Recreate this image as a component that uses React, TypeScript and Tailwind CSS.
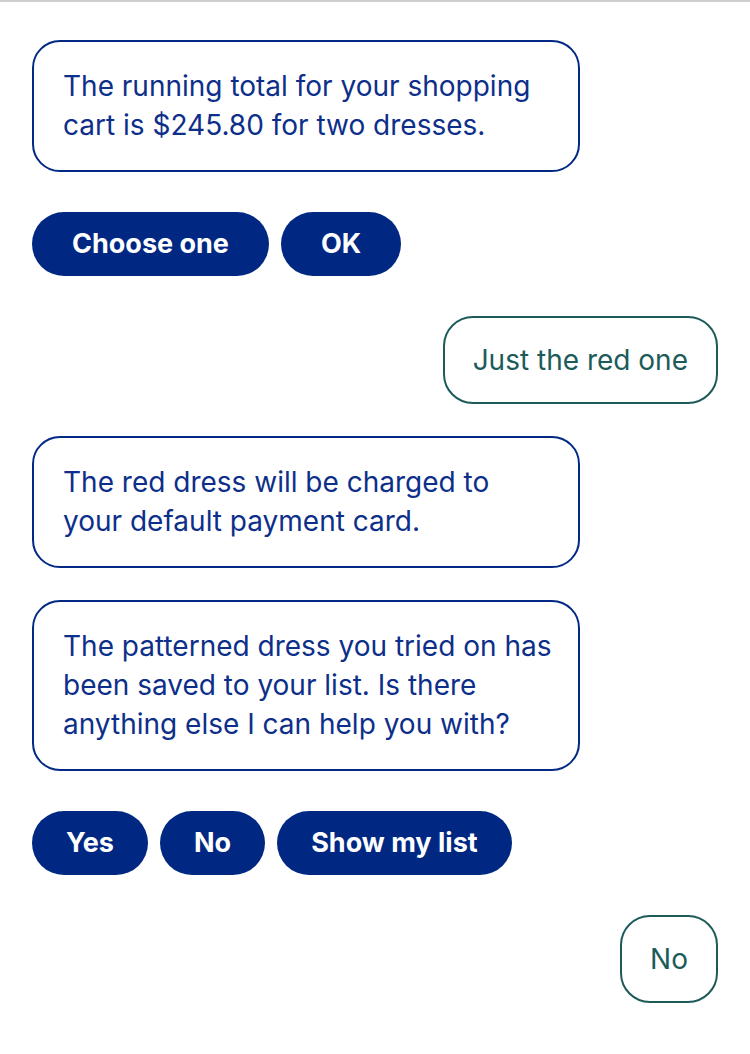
const font = { fontFamily: "Inter, 'Noto Sans', sans-serif" };

function BotBubble({ children }: { children: React.ReactNode }) {
  return (
    <div className="w-[548px] rounded-[28px] border-2 border-[#022a84] pl-[29px] pr-[23px] py-[25px] text-[28px] leading-[39px] text-[#0d2f8a]">
      {children}
    </div>
  );
}

function UserBubble({ children }: { children: React.ReactNode }) {
  return (
    <div className="self-end rounded-[30px] border-2 border-[#1d5b5a] px-[28px] py-[22px] text-[28px] leading-[40px] text-[#1d5b5a]">
      {children}
    </div>
  );
}

function Chips({ items, wide }: { items: string[]; wide?: boolean }) {
  return (
    <div className="flex gap-3">
      {items.map((t) => (
        <button
          key={t}
          className={`h-16 rounded-full bg-[#002882] text-[27px] font-bold text-white ${
            wide ? "px-[40px]" : "px-[34px]"
          }`}
        >
          {t}
        </button>
      ))}
    </div>
  );
}

export default function App() {
  return (
    <main className="min-h-[1054px] w-[750px] bg-white" style={font}>
      <div className="h-[2px] bg-[#cfcfcf]" />
      <div className="flex flex-col px-8 pt-[38px]">
        <BotBubble>
          The running total for your shopping cart is $245.80 for two dresses.
        </BotBubble>
        <div className="mt-10">
          <Chips items={["Choose one", "OK"]} wide />
        </div>
        <div className="mt-10 flex flex-col">
          <UserBubble>Just the red one</UserBubble>
        </div>
        <div className="mt-8">
          <BotBubble>
            The red dress will be charged to your default payment card.
          </BotBubble>
        </div>
        <div className="mt-8">
          <BotBubble>
            The patterned dress you tried on has been saved to your list. Is there anything else I can help you with?
          </BotBubble>
        </div>
        <div className="mt-10">
          <Chips items={["Yes", "No", "Show my list"]} />
        </div>
        <div className="mt-10 flex flex-col">
          <UserBubble>No</UserBubble>
        </div>
      </div>
    </main>
  );
}
